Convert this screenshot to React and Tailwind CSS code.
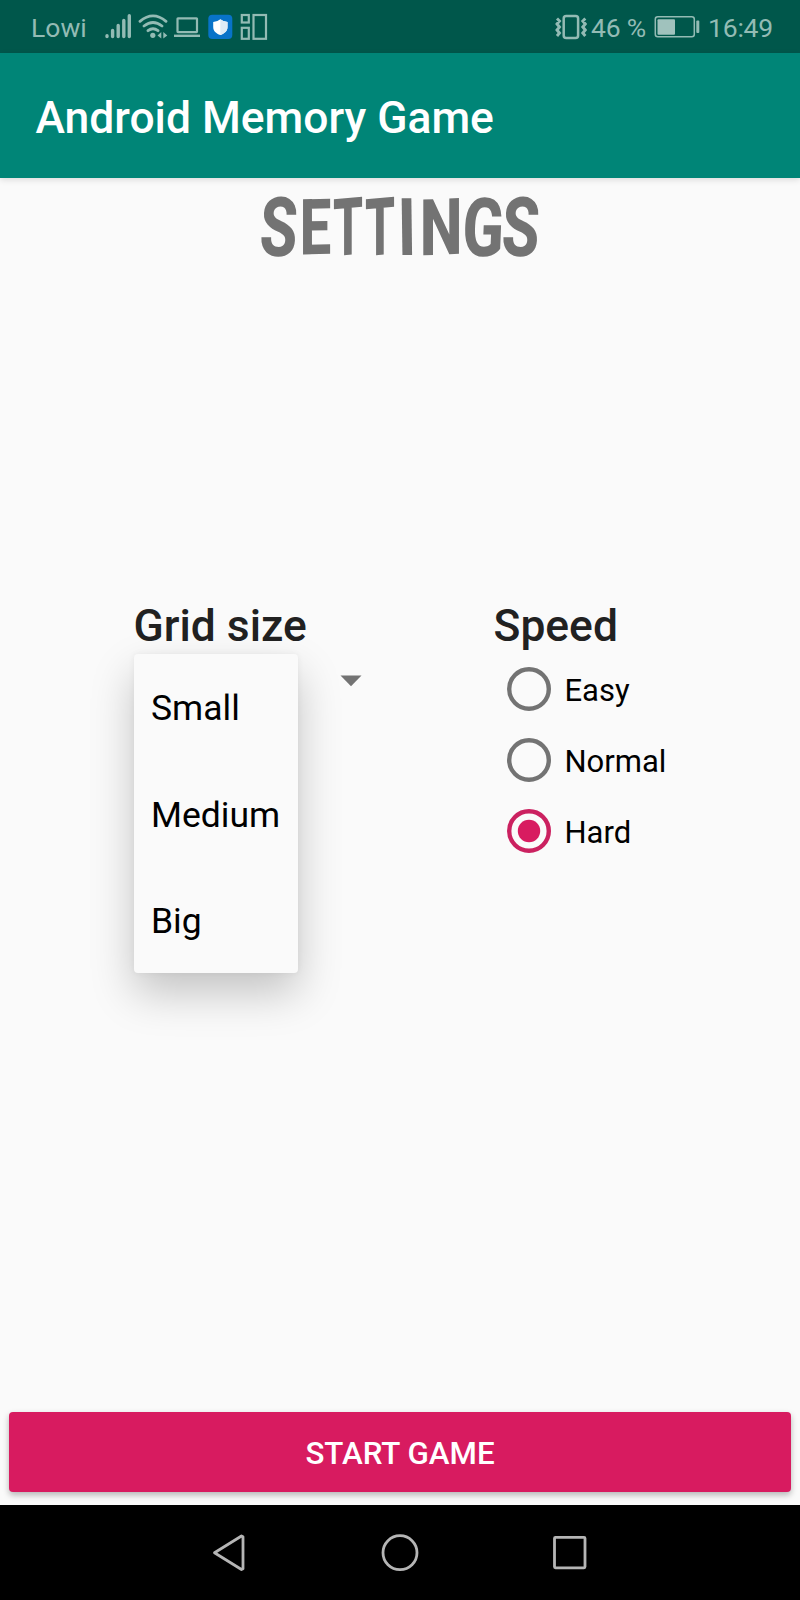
import React from "react";

const sizes = ["Small", "Medium", "Big"];
const speeds = ["Easy", "Normal", "Hard"];

const titleLetters = [
  { c: "S", box: "w-[38px]", t: "scale-x-[0.76] scale-y-[1.03] -skew-x-4" },
  { c: "E", box: "w-[35px]", t: "scale-x-[0.7] scale-y-[0.97] -skew-y-1" },
  { c: "T", box: "w-[31px]", t: "scale-x-[0.6] -skew-y-3" },
  { c: "T", box: "w-[32px]", t: "scale-x-[0.6] -skew-y-3" },
  { c: "I", box: "w-[22px]", t: "scale-x-[0.76] skew-x-1" },
  { c: "N", box: "w-[46px]", t: "scale-x-[0.76] scale-y-[0.98] -skew-y-2" },
  { c: "G", box: "w-[38px]", t: "scale-x-[0.76] scale-y-[1.02] -skew-x-3" },
  { c: "S", box: "w-[38px]", t: "scale-x-[0.76] scale-y-[1.03] -skew-x-4" },
];

function StatusBar() {
  return (
    <header className="flex h-[53px] shrink-0 items-center justify-between bg-[#00574b] pl-[31px] pr-[27px] text-[26.500px] text-[#93bbb4]">
      <div className="flex items-center">
        <span className="w-[74px] pt-[3px]">Lowi</span>
        <svg width="164" height="28" viewBox="105 13 164 28" fill="none" stroke="currentColor" aria-hidden="true">
          <g strokeWidth="3.400" strokeLinecap="round">
            <path d="M107 35.700V36.500M112.600 30.500V36.500M118.200 25.500V36.500M123.800 20.500V36.500M129.300 15.800V36.500" />
          </g>
          <g strokeWidth="2.800" strokeLinecap="round">
            <path d="M140 21.300Q153 10.500 166 21.300M144 26Q153 19 162 26M148 30.700Q153 26.800 158 30.700" />
          </g>
          <circle cx="152.800" cy="35.300" r="2.600" fill="currentColor" stroke="none" />
          <path d="M161.300 32V38.500L157.500 35.500ZM163.300 32V38.500L167.300 35.500Z" fill="currentColor" stroke="none" />
          <rect x="177.500" y="18.300" width="19.500" height="13.800" rx="0.500" strokeWidth="2.200" />
          <path d="M174 35.800H200" strokeWidth="2.400" />
          <rect x="208.300" y="14.800" width="24" height="24.200" rx="4" fill="#0873c8" stroke="none" />
          <path d="M220.300 19.200Q224 22 227.500 22V27C227.500 31 224.500 33.500 220.300 35C216 33.500 213.200 31 213.200 27V22Q217 22 220.300 19.200Z" fill="#fff" stroke="none" />
          <path d="M220.300 19.200Q224 22 227.500 22V27C227.500 31 224.500 33.500 220.300 35Z" fill="#deebf5" stroke="none" />
          <rect x="241.800" y="15" width="7" height="7.500" strokeWidth="2.200" />
          <rect x="241.800" y="27.800" width="7" height="11" strokeWidth="2.200" />
          <rect x="253.500" y="15" width="12.500" height="23.800" strokeWidth="2.200" />
        </svg>
      </div>
      <div className="flex items-center">
        <svg width="34" height="26" viewBox="555 14 34 26" fill="none" stroke="currentColor" aria-hidden="true">
          <rect x="564.700" y="16" width="14.400" height="22" rx="2.500" strokeWidth="2.500" />
          <path d="M558 18.500L560.500 21L558 24L560.500 27L558 30L560.500 33L558 36M586.300 18.500L583.800 21L586.300 24L583.800 27L586.300 30L583.800 33L586.300 36" strokeWidth="2.900" />
        </svg>
        <span className="w-[65px] whitespace-nowrap pl-[3px] pt-[3px] tracking-[-0.200px]">46 %</span>
        <svg width="48" height="24" viewBox="653 15 48 24" fill="none" stroke="currentColor" aria-hidden="true">
          <rect x="655.300" y="16.800" width="39" height="20" rx="2.500" strokeWidth="1.500" />
          <rect x="657.500" y="19.300" width="17.500" height="15.500" rx="1" fill="#a0c2bd" stroke="none" />
          <rect x="696.300" y="20.500" width="3" height="12.500" rx="1" fill="currentColor" stroke="none" />
        </svg>
        <span className="pl-[7px] pt-[3px] tracking-[-0.200px]">16:49</span>
      </div>
    </header>
  );
}

function Radio({ label, selected }) {
  return (
    <label className="flex h-[71px] items-center">
      <svg width="44" height="44" viewBox="0 0 44 44" fill="none" aria-hidden="true">
        <circle cx="22" cy="22" r="19.800" stroke={selected ? "#cb2160" : "#737373"} strokeWidth="4.400" />
        {selected && <circle cx="22" cy="22" r="11.200" fill="#d81b60" />}
      </svg>
      <span className="pl-[13.500px] pt-[4px] text-[31px] leading-[36px] text-black">{label}</span>
    </label>
  );
}

export default function App() {
  return (
    <div className="flex h-[1600px] w-[800px] flex-col overflow-hidden bg-[#fafafa] font-['Roboto',sans-serif]">
      <StatusBar />
      <div className="z-10 flex h-[125px] shrink-0 items-center bg-[#008577] pl-[35.500px] pt-[5px] text-[44.400px] font-medium text-white shadow-[0_2px_6px_rgba(0,0,0,0.12)]">
        <h1>Android Memory Game</h1>
      </div>

      <main className="flex min-h-0 flex-1 flex-col">
        <h2 className="flex h-[96px] shrink-0 justify-center pt-[4px] text-[80px] font-extrabold leading-[92px] text-[#737373]">
          {titleLetters.map((l, i) => (
            <span key={i} className={"flex justify-center " + l.box}>
              <span className={"block " + l.t}>{l.c}</span>
            </span>
          ))}
        </h2>

        <div className="mt-[326px] flex flex-1 pl-[133.500px]">
          <section className="w-[360px]">
            <h3 className="text-[44.400px] font-medium leading-[52px] text-[#212121]">Grid size</h3>
            <div className="flex items-start">
              <ul className="mt-[1.500px] w-[164.500px] rounded-[4px] bg-[#fafafa] shadow-[0_20px_44px_rgba(0,0,0,0.22),0_0_6px_rgba(0,0,0,0.06)]">
                {sizes.map((s) => (
                  <li key={s} className="flex h-[106.600px] items-center pl-[17.500px] pt-[4px] text-[35.500px] text-black">
                    {s}
                  </li>
                ))}
              </ul>
              <svg className="ml-[42px] mt-[23px]" width="22" height="12" viewBox="0 0 22 12" aria-hidden="true">
                <path d="M0.500 0.500H21.500L11 11.300Z" fill="#737373" />
              </svg>
            </div>
          </section>
          <section>
            <h3 className="text-[44.400px] font-medium leading-[52px] text-[#212121]">Speed</h3>
            <div className="mt-[1.500px] pl-[13.500px]">
              {speeds.map((s) => (
                <Radio key={s} label={s} selected={s === "Hard"} />
              ))}
            </div>
          </section>
        </div>

        <div className="shrink-0 px-[9px] pb-[13px]">
          <button className="h-[80px] w-full rounded-[4px] bg-[#d81b60] pt-[4px] text-[31.300px] font-medium text-white shadow-[0_3px_6px_rgba(0,0,0,0.28)]">
            START GAME
          </button>
        </div>
      </main>

      <nav className="z-10 flex h-[95px] shrink-0 items-center justify-center bg-black">
        <svg width="376" height="40" viewBox="212 1533 376 40" fill="none" stroke="#b5b5b5" strokeWidth="2.800" strokeLinejoin="round" aria-hidden="true">
          <path d="M214.500 1552.700L241.500 1536L243 1536.700V1568.800L241.500 1569.500Z" />
          <circle cx="400" cy="1552.700" r="17" />
          <rect x="554.500" y="1537.300" width="30.500" height="30.500" rx="1" />
        </svg>
      </nav>
    </div>
  );
}
